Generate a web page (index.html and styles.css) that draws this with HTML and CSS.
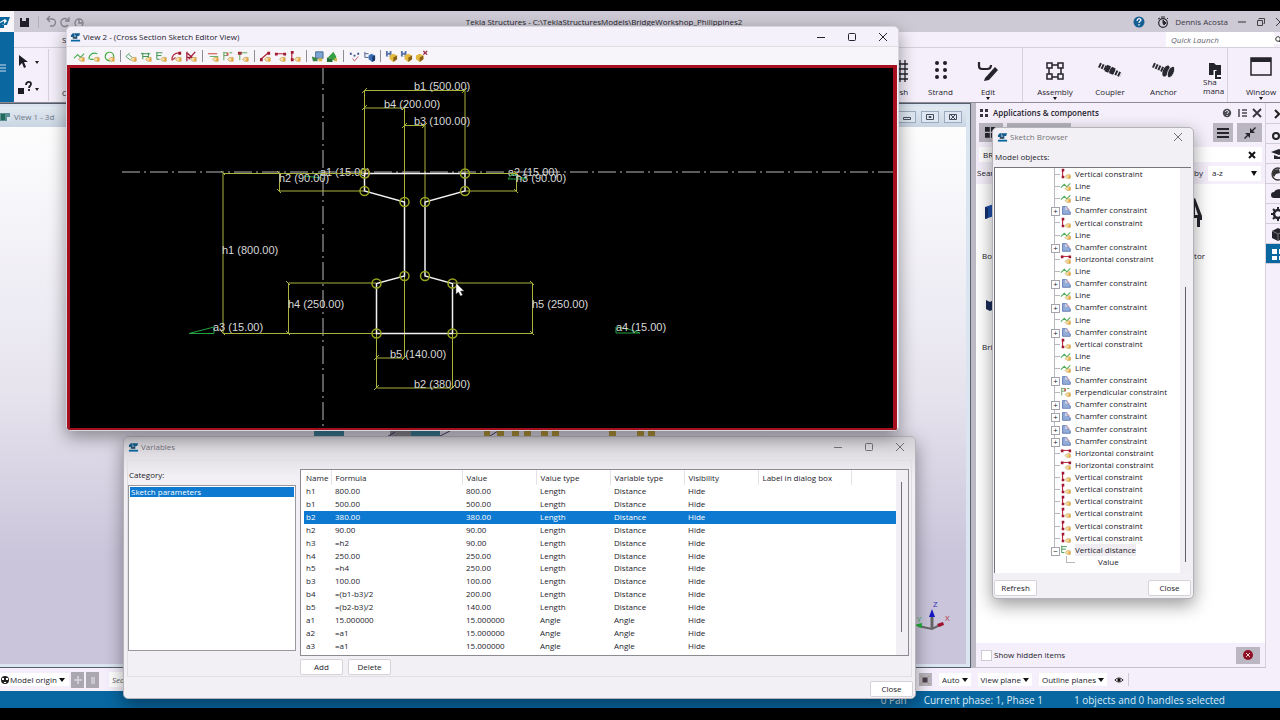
FILE: index.html
```html
<!DOCTYPE html>
<html lang="en">
<head>
<meta charset="utf-8">
<title>Tekla Structures</title>
<link rel="stylesheet" href="styles.css">
</head>
<body>
<svg class="defs" aria-hidden="true">
  <symbol id="logo" viewBox="0 0 12 10"><path d="M1 3l2-2h2v4H1zM5 1h6l-1 3H8v3H6V4z" fill="#135c8d"/><path d="M3 5h4v2H3z" fill="#3b4c58"/><path d="M1 8h10v2H1z" fill="#0a68a3"/></symbol>
  <symbol id="tag" viewBox="0 0 14 14"><path d="M6 10l2-2h4v4H8z" fill="#f6dfa4" stroke="#bd9448" stroke-width=".7"/><path d="M10 9h2v3h-2z" fill="#e9a53a"/></symbol>
  <symbol id="line" viewBox="0 0 14 14"><path d="M1 9l4-4 3 3 4-4" fill="none" stroke="#4fae5a" stroke-width="1.2"/><use href="#tag"/></symbol>
  <symbol id="arc" viewBox="0 0 14 14"><path d="M1 10c0-5 4-8 9-6M2 10h4" fill="none" stroke="#3fae4c" stroke-width="1.3"/><use href="#tag"/></symbol>
  <symbol id="circ" viewBox="0 0 14 14"><circle cx="7" cy="7" r="4.600" fill="none" stroke="#45ad3e" stroke-width="1.3"/><use href="#tag"/></symbol>
  <symbol id="ang" viewBox="0 0 14 14"><path d="M1 7l4-4M1 7l5 4M4 5l4 3" fill="none" stroke="#4b9d63"/><use href="#tag"/></symbol>
  <symbol id="dimh" viewBox="0 0 14 14"><path d="M3 3v7M9 3v6M1 4h10M3 7h6" fill="none" stroke="#348c45"/><use href="#tag"/></symbol>
  <symbol id="dimv" viewBox="0 0 14 14"><path d="M2 2v8M2 3h6M2 6h5M2 10h3" fill="none" stroke="#348c45"/><use href="#tag"/></symbol>
  <symbol id="rad" viewBox="0 0 14 14"><path d="M2 11c0-5 3-8 8-8M2 11l4-3" fill="none" stroke="#b93a47" stroke-width="1.300"/><path d="M9 2h3v3H9z" fill="#a0122b"/><use href="#tag"/></symbol>
  <symbol id="fix" viewBox="0 0 14 14"><path d="M2 2v10M2 3l9 8M11 2l-7 8M2 8h5" fill="none" stroke="#a0203a" stroke-width="1.4"/><use href="#tag"/></symbol>
  <symbol id="par" viewBox="0 0 14 14"><path d="M1 4h10" stroke="#c9473d" stroke-width="1.2"/><path d="M3 7h9" stroke="#5da95f"/><use href="#tag"/></symbol>
  <symbol id="perp" viewBox="0 0 14 14"><path d="M2 2v9M2 3h4v3H2M8 3h3" fill="none" stroke="#579e52"/><path d="M5 3h2v3H5z" fill="#d25a51"/><use href="#tag"/></symbol>
  <symbol id="coin" viewBox="0 0 14 14"><path d="M3 3v8M3 3h8" fill="none" stroke="#56a351"/><path d="M1 2h4v3H1z" fill="#9d3037"/><use href="#tag"/></symbol>
  <symbol id="free" viewBox="0 0 14 14"><path d="M2 10l8-7" stroke="#b92a3d" stroke-width="1.3"/><path d="M1 9h3v3H1zM9 2h3v3H9z" fill="#a01930"/><use href="#tag"/></symbol>
  <symbol id="horz" viewBox="0 0 14 14"><path d="M1 4h11" stroke="#b92a3d" stroke-width="1.2"/><path d="M1 3h3v3H1zM10 3h3v3h-3z" fill="#a01930"/><use href="#tag"/></symbol>
  <symbol id="vert" viewBox="0 0 14 14"><path d="M3 2v9" stroke="#b92a3d" stroke-width="1.3"/><path d="M2 1h3v3H2zM2 9h3v3H2z" fill="#a01930"/><use href="#tag"/></symbol>
  <symbol id="cham" viewBox="0 0 14 14"><path d="M3 3h5v3l4 3v3H3z" fill="#94acd8" stroke="#5976b0"/><path d="M6 3h3v4H6z" fill="#c7cfe8"/><path d="M8 4l3 3" stroke="#b4536c"/></symbol>
  <symbol id="prev" viewBox="0 0 14 14"><path d="M5 2h8v7H5z" fill="#7ba6d3" stroke="#47678f"/><path d="M1 7l6 2v3H2z" fill="#3c8446"/><path d="M8 9h4v3H8z" fill="#d9b84a"/></symbol>
  <symbol id="prev2" viewBox="0 0 14 14"><path d="M2 8l6-6 3 5v5z" fill="#36a044"/><path d="M1 8l6 2v3H1z" fill="#246e33"/><path d="M9 9h3v3H9z" fill="#d9b84a"/></symbol>
  <symbol id="dots" viewBox="0 0 14 14"><path d="M2 3h2v2H2zM6 5h2v2H6zM10 3h2v2h-2z" fill="#34508a"/><path d="M5 9l2 3 4-5" fill="none" stroke="#c66173"/></symbol>
  <symbol id="treei" viewBox="0 0 14 14"><path d="M2 2v6h4M2 4h4" fill="none" stroke="#4b5d88"/><path d="M6 6l3-2 4 2v5l-3 2-4-3z" fill="#3e6fb5"/><path d="M10 7l3-1v5l-3 2z" fill="#1e3768"/></symbol>
  <symbol id="box" viewBox="0 0 14 14"><path d="M5 6l4-2 4 2v4l-4 3-4-3z" fill="#e3b93e"/><path d="M9 8l4-2v4l-4 3z" fill="#876015"/></symbol>
  <symbol id="boxs" viewBox="0 0 14 14"><path d="M1 1h6v6H1z" fill="#5a73a8"/><path d="M3 1h2v2H3zM3 5h2v2H3z" fill="#fff"/><use href="#box"/></symbol>
  <symbol id="boxx" viewBox="0 0 14 14"><g transform="translate(-4 0)"><use href="#box"/></g><path d="M9 1l4 4M13 1L9 5" stroke="#9b2a48" stroke-width="1.400"/></symbol>
  <symbol id="x" viewBox="0 0 10 10"><path d="M1 1l8 8M9 1L1 9" stroke="currentColor" fill="none"/></symbol>
  <symbol id="sq" viewBox="0 0 10 10"><rect x="1.500" y="1.500" width="7" height="7" rx="1" stroke="currentColor" fill="none"/></symbol>
  <symbol id="min" viewBox="0 0 10 10"><path d="M1 5.500h8" stroke="currentColor"/></symbol>
</svg>

<div class="app">
  <header class="top">
    <div class="brand">
      <svg class="brand-logo" viewBox="0 0 14 21"><path d="M0 6h10l-3 8H4v3H0z" fill="#0b659d"/><path d="M0 11l5-3 2 2-4 4H0z" fill="#fff"/><path d="M0 12l4-2v3l-4 2z" fill="#0b659d"/></svg>
      <button class="brand-menu" aria-label="Menu"><svg viewBox="0 0 14 70"><path d="M0 33h6M0 36h6M0 39h6" stroke="#cfe3f2"/></svg></button>
    </div>
    <div class="top-main">
      <div class="titlebar">
        <svg class="quick" viewBox="0 0 80 21"><path d="M6 7h9v9H6z" fill="#1f1f29"/><path d="M8 7h4v3H8z" fill="#cfcbd7"/><path d="M24.500 5v12" stroke="#b5b1bc"/><g fill="none" stroke="#85828d" stroke-width="1.300"><path d="M34 8h4a3 3 0 010 7h-2M36 5l-3 3 3 3"/><path d="M54 9a4 4 0 10 0 5M55 6v4h-4"/><circle cx="65" cy="12" r="4"/><path d="M65 9v3h3"/></g></svg>
        <h1>Tekla Structures - C:\TeklaStructuresModels\BridgeWorkshop_Philippines2</h1>
        <div class="user">
          <svg class="ic-help" viewBox="0 0 12 12"><circle cx="6" cy="6" r="5.500" fill="#155f92"/><path d="M4 5c0-3 4-3 4-1 0 1-2 1.300-2 3M6 8v1.500" stroke="#fff" stroke-width="1.200" fill="none"/></svg>
          <svg class="ic-watch" viewBox="0 0 12 12"><circle cx="6" cy="7" r="4.300" fill="none" stroke="#26242d" stroke-width="1.200"/><path d="M6 7V4l3 3-2 2zM4 1h4M1 3l2-1M10 2l1 1" stroke="#26242d" fill="#26242d"/></svg>
          <span>Dennis Acosta</span>
          <svg class="ic-win" viewBox="0 0 10 10"><path d="M1 5h8" stroke="#333"/></svg>
          <svg class="ic-win" viewBox="0 0 10 10"><path d="M1.500 3.500h5v5h-5zM3 2.500V1.500h5.500v5H7.500" fill="none" stroke="#444"/></svg>
          <svg class="ic-win" viewBox="0 0 10 10"><use href="#x"/></svg>
        </div>
      </div>
      <div class="subbar"><span class="tab-cut">Steel</span><input class="launch" type="text" placeholder="Quick Launch" aria-label="Quick Launch"><svg class="mag" viewBox="0 0 8 8"><circle cx="4" cy="3" r="2.300" fill="none" stroke="#333"/><path d="M5 5l3 3" stroke="#333"/></svg></div>
      <div class="ribbon">
        <svg class="rib-left" viewBox="0 0 52 55"><path d="M5 7v11l3-3 2 5 2-1-2-5h4z" fill="#1d1b24"/><path d="M21 13h4l-2 3zM21 40h4l-2 3z" fill="#222"/><path d="M4 40h6v6H4z" fill="#1d1b24"/><path d="M12 37c0-4 5-4 5-1 0 2-2 2-2 4m0 1v2" fill="none" stroke="#1d1b24" stroke-width="1.800"/><path d="M34.500 1v52" stroke="#d5d0dc"/></svg>
        <span class="cut-c">Concrete</span>
        <div class="rib-right">
          <button class="rb mesh"><svg viewBox="0 0 24 24"><path d="M0 5h22M0 10h22M0 15h22M0 20h22M4 1v22M9 1v22M14 1v22M19 1v22" stroke="#24222b" stroke-width="1.300"/></svg><span>Mesh</span></button>
          <button class="rb strand"><svg viewBox="0 0 24 24"><g fill="#1f1d26"><circle cx="8" cy="4" r="2"/><circle cx="16" cy="4" r="2"/><circle cx="8" cy="11" r="2"/><circle cx="16" cy="11" r="2"/><circle cx="8" cy="18" r="2"/><circle cx="16" cy="18" r="2"/></g></svg><span>Strand</span></button>
          <button class="rb edit"><svg viewBox="0 0 24 24"><path d="M3 3v4q0 3 3 3h5q4 0 4-4" fill="none" stroke="#25232c" stroke-width="2.200"/><path d="M9 19l10-11 3 3-9 10-5 1z" fill="#25232c"/></svg><span>Edit</span><i></i></button>
          <button class="rb assembly"><svg viewBox="0 0 24 24"><path d="M6 6h12v12H6z" fill="none" stroke="#25232c" stroke-width="1.500"/><g fill="#f4effa" stroke="#25232c" stroke-width="1.500"><path d="M4 4h5v5H4zM15 4h5v5h-5zM4 15h5v5H4zM15 15h5v5h-5z"/></g></svg><span>Assembly</span><i></i></button>
          <button class="rb coupler"><svg viewBox="0 0 24 24"><path d="M1 6l22 10" stroke="#2a2831" stroke-width="5" stroke-dasharray="2 1"/><path d="M8 9l9 4" stroke="#2a2831" stroke-width="7" stroke-dasharray="4 1"/></svg><span>Coupler</span></button>
          <button class="rb anchor"><svg viewBox="0 0 24 24"><path d="M1 6l13 6" stroke="#2a2831" stroke-width="5" stroke-dasharray="2 1"/><ellipse cx="14" cy="12" rx="3" ry="6" transform="rotate(25 14 12)" fill="#2a2831"/><ellipse cx="19" cy="13" rx="3" ry="6" transform="rotate(25 19 13)" fill="#2a2831" stroke="#fff" stroke-width=".7"/></svg><span>Anchor</span></button>
          <button class="rb share"><svg viewBox="0 0 24 24"><path d="M6 4h5l2 2h5v10H6z" fill="#25232c"/><path d="M12 11v8q0 1 2 1h4" fill="none" stroke="#fff" stroke-width="3"/><path d="M13 12v7h5" fill="none" stroke="#25232c" stroke-width="2"/></svg><span>Sha</span><span>mana</span></button>
          <button class="rb window"><svg viewBox="0 0 24 24"><path d="M2 3h20v17H2z" fill="none" stroke="#25232c" stroke-width="1.500"/><path d="M2 3h20v4H2z" fill="#25232c"/></svg><span>Window</span><i></i></button>
        </div>
      </div>
    </div>
  </header>

  <div class="middle">
    <main class="workspace">
      <div class="mdi-bar">
        <svg class="mdi-ic" viewBox="0 0 12 10"><path d="M0 1h10v8H0z" fill="#5b8f91"/><path d="M1 2h4v6H1z" fill="#1f6c5d"/><path d="M7 5h3v4H7z" fill="#d6e3e8"/></svg>
        <span>View 1 - 3d</span>
        <div class="mdi-btns"><button aria-label="Minimize"><svg viewBox="0 0 10 10"><path d="M1.500 5.500h7v2h-7z" fill="none" stroke="#454d5c"/></svg></button><button aria-label="Restore"><svg viewBox="0 0 10 10"><path d="M1.500 2.500h7v5h-7zM4 4.500h2v1H4z" fill="none" stroke="#454d5c"/></svg></button><button aria-label="Close view"><svg viewBox="0 0 10 10"><path d="M2 2l6 6M8 2L2 8M1.500 2.500h7v5h-7z" fill="none" stroke="#454d5c"/></svg></button></div>
      </div>
      <div class="scene">
        <svg class="axis" viewBox="0 0 40 36"><path d="M20 24V12" stroke="#666" stroke-width="3"/><path d="M6 22l14 3 8-4" fill="none" stroke="#666" stroke-width="2"/><path d="M17 13l3-8 3 8z" fill="#1616c4"/><path d="M2 21l8-2v5z" fill="#22b53b"/><path d="M25 20l6-2 1 3-5 2z" fill="#a0122b"/><text x="21" y="3" class="az">Z</text><text x="33" y="17" class="ax">X</text><text x="5" y="18" class="ay">Y</text></svg>
      </div>
      <svg class="model-bits" viewBox="0 0 500 8"><path d="M14 1h30v6H14zM111 1h29v6h-29z" fill="#3d7d96"/><path d="M90 1h21v6H90z" fill="#8a8994"/><path d="M85 8l10-6M140 6l10-5M190 6l8-5" stroke="#4b3a6c"/><path d="M184 1h6v6h-6zM197 1h7v6h-7zM212 1h7v6h-7zM224 1h7v6h-7zM241 1h7v6h-7zM252 1h7v6h-7zM309 1h7v6h-7zM337 1h7v6h-7zM348 1h7v6h-7z" fill="#b5963c"/></svg>
    </main>

    <aside class="panel">
      <div class="p-head"><svg viewBox="0 0 10 10"><path d="M1 1h3v3H1zM6 1h3v3H6zM1 6h3v3H1zM6 6h3v3H6z" fill="#35333d"/></svg><h2>Applications &amp; components</h2>
        <svg class="r" viewBox="0 0 10 10"><circle cx="5" cy="5" r="4.200" fill="#4a4852"/><path d="M3.500 4c0-2 3-2 3 0C6.500 5 5 5 5 6M5 7v1" stroke="#fff" fill="none"/></svg>
        <svg viewBox="0 0 10 10"><path d="M2 1v8M5 2h5M5 5h5M5 8h5" stroke="#4a4852" stroke-width="1.500"/></svg>
        <svg viewBox="0 0 10 10"><path d="M1 1l8 8M9 1L1 9" stroke="#35333d" stroke-width="1.800"/></svg></div>
      <div class="p-tools"><button class="t1" aria-label="Grid"><svg viewBox="0 0 10 10"><path d="M0 0h4v4H0zM5 0h4v4H5zM0 5h4v4H0zM5 5h4v4H5z" fill="#25232c"/></svg></button><button class="t2" aria-label="Catalog"></button><button class="t3" aria-label="List"><svg viewBox="0 0 12 12"><path d="M0 2h12M0 6h12M0 10h12" stroke="#25232c" stroke-width="2"/></svg></button><button class="t4" aria-label="Collapse"><svg viewBox="0 0 12 12"><path d="M6 6h5L9 4l3-3-1-1-3 3-2-2zM6 6H1l2 2-3 3 1 1 3-3 2 2z" fill="#25232c"/></svg></button></div>
      <div class="p-search"><input type="text" value="BRIDGE" aria-label="Search"><button aria-label="Clear"><svg viewBox="0 0 10 10"><path d="M2 2l6 6M8 2L2 8" stroke="#111" stroke-width="2"/></svg></button></div>
      <div class="p-sort"><span>Search</span><label for="sort">by</label><select id="sort"><option>a-z</option></select><b></b></div>
      <div class="p-body">
        <div class="comp"><svg viewBox="0 0 20 30"><path d="M5 9l12-4v12L5 21z" fill="#1d4fa8"/><path d="M5 9l3 1v10l-3 1z" fill="#12306d"/></svg><span>Box</span></div>
        <div class="comp right"><svg viewBox="0 0 20 30"><path d="M7 30V2l3-2 7 18v4h-2v7h-3v-9H9v10zM10 8v9h3z" fill="#25232c" fill-rule="evenodd"/></svg><span>tor</span></div>
        <div class="comp"><svg viewBox="0 0 20 30"><path d="M6 11l4 2 8-5v10l-8 4-4-2z" fill="#1b2c58"/></svg><span>Bridge</span></div>
      </div>
      <div class="p-foot"><label><input type="checkbox">Show hidden items</label><button aria-label="Stop"><svg viewBox="0 0 12 12"><circle cx="6" cy="6" r="5" fill="#901126"/><path d="M4 4l4 4M8 4L4 8" stroke="#f1cfd5"/></svg></button></div>
    </aside>

    <nav class="rail">
      <button aria-label="Expand"><svg viewBox="0 0 16 16"><path d="M5 4l4 4-4 4" fill="none" stroke="#222" stroke-width="2"/></svg></button>
      <button aria-label="Help"><svg viewBox="0 0 16 16"><circle cx="6" cy="10" r="3" fill="none" stroke="#222" stroke-width="2"/><path d="M11 4c1-3 5-2 4 0-1 1-2 2-2 3" fill="none" stroke="#222" stroke-width="1.500"/></svg></button>
      <button aria-label="Learning"><svg viewBox="0 0 16 16"><path d="M1 6l8-3 7 3-7 3zM4 9l5 2 5-2v4H4z" fill="#25232c"/></svg></button>
      <button aria-label="Web"><svg viewBox="0 0 16 16"><circle cx="8" cy="8" r="6" fill="none" stroke="#333" stroke-width="1.300"/><path d="M4 4l5-1 1 4-4 1-2 3-2-3zM10 9l4-1-2 5-2-1z" fill="#333"/></svg></button>
      <button aria-label="Cloud"><svg viewBox="0 0 16 16"><path d="M4 12a3 3 0 010-6 5 5 0 019 0v6z" fill="#25232c"/></svg></button>
      <button aria-label="Settings"><svg viewBox="0 0 16 16"><circle cx="8" cy="8" r="4" fill="none" stroke="#25232c" stroke-width="2.500"/><path d="M8 1v2M8 13v2M1 8h2M3 3l2 2M3 13l2-2" stroke="#25232c" stroke-width="2"/></svg></button>
      <button aria-label="Objects"><svg viewBox="0 0 16 16"><path d="M2 5l6-3 6 3v7l-6 3-6-3z" fill="#25232c"/><path d="M2 5l6 3 6-3M8 8v7" stroke="#777" fill="none"/></svg></button>
      <button class="on" aria-label="Components"><svg viewBox="0 0 16 16"><path d="M2 3h5v5H2zM9 3h5v5H9zM2 10h5v4H2zM9 10h5v4H9z" fill="#fff"/></svg></button>
    </nav>
  </div>

  <div class="bottombar">
    <button class="origin"><svg viewBox="0 0 10 10"><circle cx="5" cy="5" r="4" fill="#222"/><path d="M2 3h2v2H2zM6 3h2v2H6zM4 7h2v1H4z" fill="#fff"/></svg>Model origin <i></i></button>
    <button class="gray" aria-label="Add"><svg viewBox="0 0 10 10"><path d="M5 1v8M1 5h8" stroke="#d9d6de" stroke-width="1.500"/></svg></button>
    <button class="gray" aria-label="Delete"><svg viewBox="0 0 10 10"><path d="M3 2h4v7H3z" fill="#c9c6cf"/></svg></button>
    <input class="find" type="text" placeholder="Search in model" aria-label="Search in model">
    <div class="snap"><button class="gray2" aria-label="Snap"><svg viewBox="0 0 12 12"><path d="M3 3h6v6H3z" fill="#4a414a"/><path d="M1 1l2 2M11 1L9 3M1 11l2-2M11 11L9 9" stroke="#b18357"/></svg></button><button>Auto<i></i></button><button>View plane<i></i></button><button>Outline planes<i></i></button><svg class="eye" viewBox="0 0 12 8"><path d="M1 4q5-5 10 0-5 5-10 0z" fill="none" stroke="#111"/><circle cx="6" cy="4" r="2" fill="#111"/></svg></div>
  </div>
  <footer class="status"><span class="pan">0 Pan</span><span class="phase">Current phase: 1, Phase 1</span><span>1 objects and 0 handles selected</span></footer>
</div>

<section class="win vars">
  <div class="w-title dim"><svg class="logo"><use href="#logo"/></svg><span>Variables</span><button aria-label="Minimize"><svg><use href="#min"/></svg></button><button aria-label="Maximize"><svg><use href="#sq"/></svg></button><button aria-label="Close window"><svg><use href="#x"/></svg></button></div>
  <div class="v-group">
    <div class="v-cat"><div class="v-label">Category:</div><div class="v-list"><div class="sel">Sketch parameters</div></div></div>
    <div class="v-right">
      <div class="v-tablebox">
        <table>
          <colgroup><col class="c1"><col class="c2"><col class="c3"><col class="c3"><col class="c3"><col class="c3"><col class="c4"><col></colgroup>
          <thead><tr><th>Name</th><th>Formula</th><th>Value</th><th>Value type</th><th>Variable type</th><th>Visibility</th><th>Label in dialog box</th><th></th></tr></thead>
          <tbody>
            <tr><td>h1</td><td>800.00</td><td>800.00</td><td>Length</td><td>Distance</td><td>Hide</td><td></td><td></td></tr>
            <tr><td>b1</td><td>500.00</td><td>500.00</td><td>Length</td><td>Distance</td><td>Hide</td><td></td><td></td></tr>
            <tr class="sel"><td>b2</td><td>380.00</td><td>380.00</td><td>Length</td><td>Distance</td><td>Hide</td><td></td><td></td></tr>
            <tr><td>h2</td><td>90.00</td><td>90.00</td><td>Length</td><td>Distance</td><td>Hide</td><td></td><td></td></tr>
            <tr><td>h3</td><td>=h2</td><td>90.00</td><td>Length</td><td>Distance</td><td>Hide</td><td></td><td></td></tr>
            <tr><td>h4</td><td>250.00</td><td>250.00</td><td>Length</td><td>Distance</td><td>Hide</td><td></td><td></td></tr>
            <tr><td>h5</td><td>=h4</td><td>250.00</td><td>Length</td><td>Distance</td><td>Hide</td><td></td><td></td></tr>
            <tr><td>b3</td><td>100.00</td><td>100.00</td><td>Length</td><td>Distance</td><td>Hide</td><td></td><td></td></tr>
            <tr><td>b4</td><td>=(b1-b3)/2</td><td>200.00</td><td>Length</td><td>Distance</td><td>Hide</td><td></td><td></td></tr>
            <tr><td>b5</td><td>=(b2-b3)/2</td><td>140.00</td><td>Length</td><td>Distance</td><td>Hide</td><td></td><td></td></tr>
            <tr><td>a1</td><td>15.000000</td><td>15.000000</td><td>Angle</td><td>Angle</td><td>Hide</td><td></td><td></td></tr>
            <tr><td>a2</td><td>=a1</td><td>15.000000</td><td>Angle</td><td>Angle</td><td>Hide</td><td></td><td></td></tr>
            <tr><td>a3</td><td>=a1</td><td>15.000000</td><td>Angle</td><td>Angle</td><td>Hide</td><td></td><td></td></tr>
          </tbody>
        </table>
        <div class="v-scroll"><div></div></div>
      </div>
      <div class="v-btns"><button class="btn">Add</button><button class="btn">Delete</button></div>
    </div>
  </div>
  <div class="v-foot"><button class="btn">Close</button></div>
</section>

<section class="win browser">
  <div class="w-title dim"><svg class="logo"><use href="#logo"/></svg><span>Sketch Browser</span><button aria-label="Close window"><svg><use href="#x"/></svg></button></div>
  <div class="b-label">Model objects:</div>
  <div class="b-box">
    <ul class="tree">
      <li><svg><use href="#vert"/></svg>Vertical constraint</li>
      <li><svg><use href="#line"/></svg>Line</li>
      <li><svg><use href="#line"/></svg>Line</li>
      <li class="ex"><svg><use href="#cham"/></svg>Chamfer constraint</li>
      <li><svg><use href="#vert"/></svg>Vertical constraint</li>
      <li><svg><use href="#line"/></svg>Line</li>
      <li class="ex"><svg><use href="#cham"/></svg>Chamfer constraint</li>
      <li><svg><use href="#horz"/></svg>Horizontal constraint</li>
      <li><svg><use href="#line"/></svg>Line</li>
      <li class="ex"><svg><use href="#cham"/></svg>Chamfer constraint</li>
      <li><svg><use href="#line"/></svg>Line</li>
      <li class="ex"><svg><use href="#cham"/></svg>Chamfer constraint</li>
      <li><svg><use href="#line"/></svg>Line</li>
      <li class="ex"><svg><use href="#cham"/></svg>Chamfer constraint</li>
      <li><svg><use href="#vert"/></svg>Vertical constraint</li>
      <li><svg><use href="#line"/></svg>Line</li>
      <li><svg><use href="#line"/></svg>Line</li>
      <li class="ex"><svg><use href="#cham"/></svg>Chamfer constraint</li>
      <li><svg><use href="#perp"/></svg>Perpendicular constraint</li>
      <li class="ex"><svg><use href="#cham"/></svg>Chamfer constraint</li>
      <li class="ex"><svg><use href="#cham"/></svg>Chamfer constraint</li>
      <li class="ex"><svg><use href="#cham"/></svg>Chamfer constraint</li>
      <li class="ex"><svg><use href="#cham"/></svg>Chamfer constraint</li>
      <li><svg><use href="#horz"/></svg>Horizontal constraint</li>
      <li><svg><use href="#horz"/></svg>Horizontal constraint</li>
      <li><svg><use href="#vert"/></svg>Vertical constraint</li>
      <li><svg><use href="#vert"/></svg>Vertical constraint</li>
      <li><svg><use href="#vert"/></svg>Vertical constraint</li>
      <li><svg><use href="#vert"/></svg>Vertical constraint</li>
      <li><svg><use href="#vert"/></svg>Vertical constraint</li>
      <li><svg><use href="#vert"/></svg>Vertical constraint</li>
      <li class="ex open"><svg><use href="#dimv"/></svg><mark>Vertical distance</mark></li>
      <li class="leaf">Value</li>
    </ul>
    <div class="b-scroll"><div></div></div>
  </div>
  <div class="b-btns"><button class="btn">Refresh</button><button class="btn">Close</button></div>
</section>

<section class="win view2">
  <div class="w-title"><svg class="logo"><use href="#logo"/></svg><span>View 2 - (Cross Section Sketch Editor View)</span><button aria-label="Minimize"><svg><use href="#min"/></svg></button><button aria-label="Maximize"><svg><use href="#sq"/></svg></button><button aria-label="Close window"><svg><use href="#x"/></svg></button></div>
  <div class="tools">
    <button aria-label="Line"><svg><use href="#line"/></svg></button><button aria-label="Arc"><svg><use href="#arc"/></svg></button><button aria-label="Circle"><svg><use href="#circ"/></svg></button><hr>
    <button aria-label="Angle"><svg><use href="#ang"/></svg></button><button aria-label="Horizontal distance"><svg><use href="#dimh"/></svg></button><button aria-label="Vertical distance"><svg><use href="#dimv"/></svg></button><button aria-label="Radius"><svg><use href="#rad"/></svg></button><button aria-label="Fix"><svg><use href="#fix"/></svg></button><hr>
    <button aria-label="Parallel"><svg><use href="#par"/></svg></button><button aria-label="Perpendicular"><svg><use href="#perp"/></svg></button><button aria-label="Coincident"><svg><use href="#coin"/></svg></button><hr>
    <button aria-label="Free"><svg><use href="#free"/></svg></button><button aria-label="Horizontal"><svg><use href="#horz"/></svg></button><button aria-label="Vertical"><svg><use href="#vert"/></svg></button><hr>
    <button aria-label="Preview"><svg><use href="#prev"/></svg></button><button aria-label="Preview solid"><svg><use href="#prev2"/></svg></button><hr>
    <button aria-label="Variables"><svg><use href="#dots"/></svg></button><button aria-label="Browser"><svg><use href="#treei"/></svg></button><hr>
    <button aria-label="Save"><svg><use href="#boxs"/></svg></button><button aria-label="Save as"><svg><use href="#boxs"/></svg></button><button aria-label="Close editor"><svg><use href="#boxx"/></svg></button>
  </div>
  <div class="canvas">
    <svg viewBox="70 68 823 360">
      <g class="cl"><path d="M122 172H894" stroke-dasharray="18 4 2 4"/><path d="M323 66V428" stroke-dasharray="18 4 2 4"/></g>
      <g class="txt"><text x="320" y="176">a1 (15.00)</text><text x="508" y="176">a2 (15.00)</text></g>
      <g class="dim">
        <path d="M364.500 174V90.500H465V174M364.500 108H404.500V358M404.500 125.500H425V202"/>
        <path d="M364 173.500H223V333.500H376M279.500 173V191H364M465 173.500H516.500V191H465"/>
        <path d="M376 283H288.500V333M453 283H532.500V333.500H453M376.500 333V388H452.500V333M376.500 358H404.500"/>
        <path d="M362 93l5-5M462 93l5-5M362 110l5-5M402 110l5-5M402 128l5-5M422 128l5-5M221 171l4 4M221 331l4 4M277 171l4 4M277 189l4 4M514 171l4 4M514 189l4 4M286 281l4 4M286 331l4 4M530 281l4 4M530 331l4 4M374 390l5-5M450 390l5-5M374 360l5-5M402 360l5-5"/>
      </g>
      <path class="sec" d="M364.500 173.500H465V191L425 202V276L452.500 283.500V333.500H376.500V283.500L404.500 276V202L364.500 191Z"/>
      <g class="pt"><circle cx="364.500" cy="173.500" r="4.500"/><circle cx="465" cy="173.500" r="4.500"/><circle cx="364.500" cy="191" r="4.500"/><circle cx="465" cy="191" r="4.500"/><circle cx="404.500" cy="202" r="4.500"/><circle cx="425" cy="202" r="4.500"/><circle cx="404.500" cy="276" r="4.500"/><circle cx="425" cy="276" r="4.500"/><circle cx="376.500" cy="283.500" r="4.500"/><circle cx="452.500" cy="283.500" r="4.500"/><circle cx="376.500" cy="333.500" r="4.500"/><circle cx="452.500" cy="333.500" r="4.500"/></g>
      <g class="tri"><path d="M189 333.500L214 327V333.500ZM616 327V333H640L628 329ZM508 179H526L512 174ZM304 176L322 178"/></g>
      <g class="txt"><text x="414" y="90">b1 (500.00)</text><text x="384" y="108">b4 (200.00)</text><text x="414" y="125">b3 (100.00)</text><text x="279" y="182">h2 (90.00)</text><text x="516" y="182">h3 (90.00)</text><text x="222" y="254">h1 (800.00)</text><text x="288" y="308">h4 (250.00)</text><text x="532" y="308">h5 (250.00)</text><text x="213" y="331">a3 (15.00)</text><text x="616" y="331">a4 (15.00)</text><text x="390" y="358">b5 (140.00)</text><text x="414" y="388">b2 (380.00)</text></g>
      <path d="M456 283v11l2.500-2 2 4 2-1-2-4h3.500z" fill="#fff" stroke="#555" stroke-width=".5"/>
    </svg>
  </div>
</section>
</body>
</html>
```
FILE: styles.css
```css
* { box-sizing: border-box; }
html, body { height: 100%; }
body {
  margin: 0;
  overflow: hidden;
  position: relative;
  background: #000;
  color: #24222b;
  font: 8px/12px "Open Sans", "Noto Sans", sans-serif;
}
button, input, select { font: inherit; color: inherit; margin: 0; padding: 0; border: 0; background: none; border-radius: 0; }
svg { display: block; flex: none; }
h1, h2 { margin: 0; font-size: 8px; font-weight: 400; }
.defs { position: absolute; width: 0; height: 0; }

.app { height: 100%; padding: 11px 0 12px; display: flex; flex-direction: column; overflow: hidden; }

/* title bar and ribbon */
.top { display: flex; height: 92px; flex: none; background: #f4effa; border-bottom: 1px solid #8f8c97; }
.brand { width: 14px; display: flex; flex-direction: column; background: #f7f5fa; }
.brand-logo { width: 14px; height: 21px; }
.brand-menu { flex: 1; background: #0b679f; }
.brand-menu svg { width: 14px; height: 70px; }
.top-main { flex: 1; min-width: 0; display: flex; flex-direction: column; overflow: hidden; }
.titlebar { height: 21px; display: flex; align-items: center; background: #cdcad5; }
.quick { width: 80px; height: 21px; }
.titlebar h1 { flex: 1; text-align: center; padding-right: 19px; color: #24222b; }
.user { display: flex; align-items: center; padding-right: 1px; margin-right: -6px; color: #3a3842; }
.ic-help { width: 12px; height: 12px; margin-right: 12px; }
.ic-watch { width: 12px; height: 12px; margin-right: 6px; }
.ic-win { width: 10px; height: 10px; margin-left: 9px; }
.subbar { height: 16px; display: flex; align-items: center; border-bottom: 1px solid #d5d0dc; }
.tab-cut { padding-left: 48px; }
.launch { margin-left: auto; width: 108px; height: 15px; background: #fff; padding-left: 5px; font-style: italic; }
.launch::placeholder, .find::placeholder { color: #66636e; opacity: 1; }
.mag { width: 8px; height: 8px; background: #fff; margin-right: -2px; }
.ribbon { flex: 1; display: flex; min-width: 0; }
.rib-left { width: 52px; height: 55px; }
.cut-c { align-self: flex-end; padding-bottom: 4px; margin-left: -4px; width: 0; overflow: visible; }
.rib-right { margin-left: auto; margin-right: -14px; display: flex; }
.rb { display: flex; flex-direction: column; align-items: center; padding-top: 11px; white-space: nowrap; line-height: 9px; overflow: hidden; }
.rb svg { width: 24px; height: 24px; margin-bottom: 4px; }
.rb i, .bottombar i { border: 3px solid transparent; border-top: 4px solid #111; border-bottom: 0; }
.rb i { border-width: 3px 2px 0; margin-top: 1px; }
.mesh { width: 36px; }
.strand { width: 49px; }
.edit { width: 57px; padding-right: 11px; }
.assembly { width: 65px; border-left: 1px solid #d5d0dc; }
.coupler { width: 46px; }
.anchor { width: 61px; }
.share { width: 32px; padding-left: 9px; align-items: flex-start; margin-right: 1px; }
.share svg { margin-bottom: -6px; }
.window { width: 67px; border-left: 1px solid #d5d0dc; }
.window svg { margin-top: -4px; margin-bottom: 8px; }

/* middle row */
.middle { flex: 1; min-height: 0; display: flex; }
.workspace { flex: 1; min-width: 0; display: flex; flex-direction: column; position: relative; border: solid #55606f; border-width: 1px 1px 1px 0; background: #dbe5f1; padding: 3px 4px 3px 0; }
.mdi-bar { height: 20px; display: flex; align-items: center; color: #6e7886; background: linear-gradient(#e2e9f1, #c9d5e3); }
.mdi-ic { width: 12px; height: 10px; margin-right: 2px; }
.mdi-btns { margin-left: auto; display: flex; gap: 5px; padding-right: 4px; }
.mdi-btns button { width: 18px; height: 12px; border: 1px solid #9babbf; display: grid; place-items: center; background: #dfe8f2; }
.mdi-btns svg { width: 10px; height: 10px; }
.scene { flex: 1; background: linear-gradient(#fdfdfe, #e6e3ee 50%, #cac5da 80%, #cac5da); position: relative; }
.axis { position: absolute; right: 14px; bottom: 24px; width: 40px; height: 36px; overflow: visible; font-size: 8px; }
.az { fill: #3434b5; }
.ax { fill: #b03346; }
.ay { fill: #35b04a; }
.model-bits { position: absolute; left: 300px; top: 326px; width: 500px; height: 8px; }

.panel { width: 295px; display: flex; flex-direction: column; background: #f4effa; border-left: 5px solid #bdbac5; border-right: 1px solid #d5d0dc; border-bottom: 1px solid #c5c1cc; }
.p-head { height: 20px; display: flex; align-items: center; padding: 0 3px; gap: 4px; }
.p-head svg { width: 10px; height: 10px; }
.p-head .r { margin-left: auto; }
.p-head svg ~ svg + svg { margin-left: 1px; }
.p-head h2 { font-weight: 600; }
.p-tools { height: 19px; display: flex; padding: 0 3px; gap: 4px; }
.p-tools button { display: grid; place-items: center; background: #b9b5c1; }
.p-tools svg { width: 12px; height: 12px; }
.t1 { width: 24px; } .t2 { width: 64px; } .t3 { width: 20px; margin-left: auto; } .t4 { width: 25px; }
.p-search { height: 15px; margin: 5px 3px 0; display: flex; background: #fff; }
.p-search input { flex: 1; padding-left: 4px; min-width: 0; }
.p-search button { width: 20px; display: grid; place-items: center; }
.p-search svg { width: 10px; height: 10px; }
.p-sort { height: 22px; display: flex; align-items: center; padding: 0 4px 0 1px; position: relative; }
.p-sort label { margin-left: auto; margin-right: 5px; }
.p-sort select { width: 53px; height: 15px; background: #fff; appearance: none; padding-left: 4px; }
.p-sort b { position: absolute; right: 8px; border: 3px solid transparent; border-top: 5px solid #111; border-bottom: 0; }
.p-body { flex: 1; min-height: 0; background: #fff; padding: 14px 60px 0 4px; display: grid; grid-template-columns: 1fr 1fr; grid-auto-rows: 91px; align-content: start; }
.comp { display: flex; flex-direction: column; align-items: flex-start; }
.comp svg { width: 20px; height: 30px; margin-bottom: 22px; }
.comp span { padding-left: 2px; }
.comp.right { align-items: flex-end; }
.p-foot { height: 24px; display: flex; align-items: center; justify-content: space-between; padding: 0 5px; }
.p-foot label { display: flex; align-items: center; gap: 2px; }
.p-foot input { appearance: none; width: 11px; height: 11px; border: 1px solid #cfcbd5; background: #fff; }
.p-foot button { width: 24px; height: 17px; background: #bab6c2; display: grid; place-items: center; }
.p-foot svg { width: 12px; height: 12px; }

.rail { width: 14px; background: #f4effa; display: flex; flex-direction: column; padding-top: 1px; }
.rail button { height: 20px; width: 14px; overflow: hidden; border-bottom: 1px solid #d0ccd8; }
.rail svg { width: 16px; height: 16px; margin-left: 4px; }
.rail .on { background: #0b679f; }

/* bottom bars */
.bottombar { height: 23px; flex: none; display: flex; align-items: center; gap: 2px; background: #f4effa; }
.bottombar button { display: flex; align-items: center; height: 13px; background: #fff; white-space: nowrap; }
.bottombar svg { width: 10px; height: 10px; }
.bottombar i { margin-left: 2px; }
.origin { width: 69px; }
.bottombar .gray { width: 13px; height: 16px; background: #aaa7b0; justify-content: center; }
.find { width: 200px; height: 15px; background: #fff; margin-left: 8px; padding-left: 3px; font-style: italic; }
.snap { margin-left: auto; margin-right: 151px; display: flex; align-items: center; gap: 7px; padding-right: 4px; border-right: 1px solid #cfcbd5; }
.snap button { padding: 0 3px; }
.snap .gray2 { width: 13px; background: #b9b5be; padding: 0; justify-content: center; }
.bottombar .eye { width: 10px; height: 8px; }
.status { height: 17px; flex: none; display: flex; align-items: center; justify-content: flex-end; padding-right: 55px; background: #0866a0; color: #dcebf6; font-size: 10px; white-space: nowrap; }
.pan { margin-right: 17px; }
.phase { margin-right: 31px; }

/* floating windows */
.win { position: absolute; display: flex; flex-direction: column; background: #f2f0f4; border: 1px solid #b5b3ba; border-radius: 5px; box-shadow: 0 6px 18px rgba(0,0,0,.4); }
.w-title { display: flex; align-items: center; flex: none; height: 19px; padding: 0 4px; }
.w-title span { flex: 1; }
.w-title.dim { color: #737178; }
.w-title .logo { width: 11px; height: 10px; margin-right: 2px; }
.w-title button { width: 10px; height: 10px; margin-right: 6px; }
.w-title button + button { margin-left: 15px; }
.w-title button svg { width: 10px; height: 10px; }
.btn { width: 43px; height: 16px; background: #fff; border: 1px solid #d5d3d8; border-radius: 2px; text-align: center; }
.sel { background: #0d79d0; color: #fff; }

.view2 { left: 66px; top: 26px; width: 833px; height: 405px; background: #f5f1fb; border-color: #d9d5df; overflow: hidden; }
.view2 .w-title { padding: 0 4px 0 3px; height: 19px; }
.tools { display: flex; align-items: center; height: 19px; padding-left: 5px; background: #f7f5f9; border-top: 1px solid #dedbe2; }
.tools button { width: 15px; height: 15px; display: grid; place-items: center; }
.tools svg { width: 13px; height: 13px; }
.tools hr { width: 1px; height: 12px; margin: 0 3px; border: 0; background: #8f8d94; }
.canvas { flex: 1; min-height: 0; background: #000; border: solid #a60f1d; border-width: 3px 4px 2px 3px; margin-right: 1px; }
.canvas svg { width: 100%; height: 100%; }
.cl path { stroke: #b8b8b8; fill: none; }
.dim path { stroke: #aab33c; fill: none; stroke-width: 1; }
.sec { stroke: #f2f2f2; fill: none; stroke-width: 1.5px; }
.pt circle { stroke: #9aa51f; fill: none; stroke-width: 1.5px; }
.tri path { stroke: #24a341; fill: none; }
.txt text { fill: #d8d8d8; font: 11px "Liberation Sans", sans-serif; }

.vars { left: 123px; top: 436px; width: 793px; height: 263px; background: linear-gradient(#d3d1d6, #f2f0f4 40px); }
.vars .w-title { height: 19px; }
.v-group { margin: 4px 3px 0; height: 217px; border: 1px solid #e0dee3; display: flex; gap: 4px; }
.v-cat { width: 168px; display: flex; flex-direction: column; padding-top: 8px; }
.v-label { height: 16px; padding-left: 1px; }
.v-list { height: 166px; background: #fff; border: 1px solid #9a989f; padding: 1px; }
.v-list .sel { height: 10px; line-height: 10px; padding-left: 1px; }
.v-right { flex: 1; padding: 8px 2px 0 0; min-width: 0; }
.v-tablebox { height: 187px; background: #fff; border: 1px solid #8d8b92; display: flex; justify-content: space-between; padding-left: 3px; }
table { width: 593px; height: 182px; border-collapse: collapse; table-layout: fixed; }
.c1 { width: 27px; } .c2 { width: 131px; } .c3 { width: 74px; } .c4 { width: 93px; }
th, td { padding: 0 0 0 4px; text-align: left; font-weight: 400; line-height: 10px; white-space: nowrap; }
th:first-child, td:first-child { padding-left: 2px; }
th { height: 15px; border-right: 1px solid #e4e2e7; }
th:last-child { border: 0; }
.v-scroll { width: 12px; background: #f1eff3; padding: 12px 0 0 5px; }
.v-scroll div { width: 1px; height: 150px; background: #707078; }
.v-btns { display: flex; gap: 5px; padding-top: 3px; }
.v-foot { display: flex; justify-content: flex-end; padding: 4px 2px 0; }

.browser { left: 992px; top: 127px; width: 202px; height: 472px; background: #f2f0f4; }
.browser .w-title { height: 18px; }
.b-label { height: 21px; line-height: 21px; padding-left: 2px; }
.b-box { flex: 1; min-height: 0; margin: 0 2px 0 1px; border-top: 1px solid #77757c; border-left: 1px solid #77757c; background: #fff; display: flex; }
.tree { flex: 1; margin: 0 0 5px 59px; padding: 0; list-style: none; display: grid; grid-auto-rows: 1fr; background: linear-gradient(#b9b7be, #b9b7be) 0 0 / 1px 382px no-repeat; }
.tree li { display: flex; align-items: center; gap: 3px; white-space: nowrap; position: relative; padding-left: 6px; line-height: 12px; }
.tree li svg { width: 12px; height: 12px; }
.tree li::before { content: ""; position: absolute; left: 0; top: 6px; width: 6px; height: 1px; background: #b9b7be; }
.tree li.ex::after { content: "+"; position: absolute; left: -3px; top: 3px; width: 7px; height: 7px; line-height: 5px; font-size: 8px; text-align: center; border: 1px solid #a5a4ac; background: #fff; }
.tree li.open::after { content: "−"; }
.tree li.leaf { padding-left: 44px; }
.tree li.leaf::before { left: 12px; top: 0; height: 6px; width: 8px; background: none; border: solid #b9b7be; border-width: 0 0 1px 1px; }
mark { background: #efedf1; color: inherit; }
.b-scroll { width: 11px; background: #f1eff3; padding: 119px 0 0 5px; }
.b-scroll div { width: 1px; height: 275px; background: #606068; }
.b-btns { display: flex; justify-content: space-between; padding: 7px 2px 2px 1px; }
```
